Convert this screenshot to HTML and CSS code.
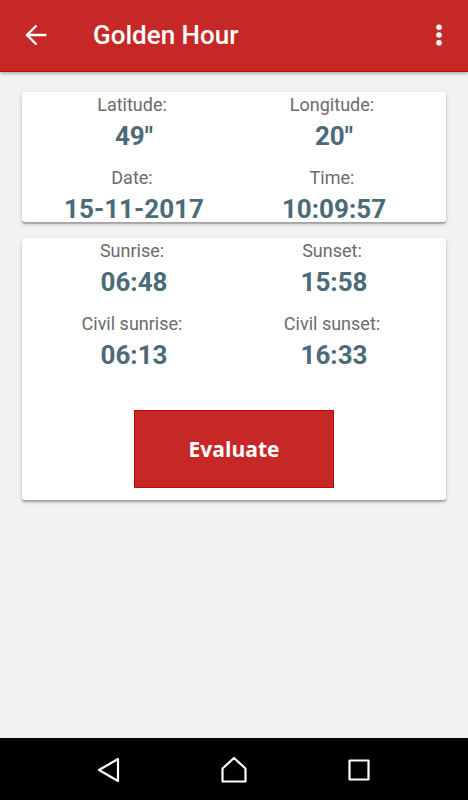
FILE: index.html
```html
<!DOCTYPE html>
<html lang="en">
<head>
<meta charset="utf-8">
<meta name="viewport" content="width=device-width, initial-scale=1">
<title>Golden Hour</title>
<link rel="stylesheet" href="styles.css">
</head>
<body>
<header class="app-bar">
  <button class="icon-button" type="button" aria-label="Back">
    <svg width="24" height="24" viewBox="0 0 24 24" fill="none" stroke="currentColor" stroke-width="2.4"><path d="M22.5 12H3M12.5 2.5 3 12l9.500 9.500"/></svg>
  </button>
  <h1 class="title">Golden Hour</h1>
  <button class="icon-button" type="button" aria-label="More options">
    <svg width="24" height="24" viewBox="0 0 24 24" fill="currentColor"><circle cx="12" cy="4.200" r="2.800"/><circle cx="12" cy="12" r="2.800"/><circle cx="12" cy="19.800" r="2.800"/></svg>
  </button>
</header>
<main class="content">
  <section class="card">
    <dl class="readings">
      <div><dt class="label">Latitude:</dt><dd class="value">49"</dd></div>
      <div><dt class="label">Longitude:</dt><dd class="value">20"</dd></div>
      <div><dt class="label">Date:</dt><dd class="value">15-11-2017</dd></div>
      <div><dt class="label">Time:</dt><dd class="value">10:09:57</dd></div>
    </dl>
  </section>
  <section class="card">
    <dl class="readings">
      <div><dt class="label">Sunrise:</dt><dd class="value">06:48</dd></div>
      <div><dt class="label">Sunset:</dt><dd class="value">15:58</dd></div>
      <div><dt class="label">Civil sunrise:</dt><dd class="value">06:13</dd></div>
      <div><dt class="label">Civil sunset:</dt><dd class="value">16:33</dd></div>
    </dl>
    <button class="evaluate" type="button">Evaluate</button>
  </section>
</main>
<nav class="system-bar" aria-label="System">
  <button class="icon-button" type="button" aria-label="Back">
    <svg width="30" height="30" viewBox="0 0 30 30" fill="none" stroke="currentColor" stroke-width="2.200" stroke-linejoin="round"><path d="M24 4v22L5 15z"/></svg>
  </button>
  <button class="icon-button" type="button" aria-label="Home">
    <svg width="30" height="30" viewBox="0 0 30 30" fill="none" stroke="currentColor" stroke-width="2.200" stroke-linejoin="round"><path d="M3.500 26.500h23V13.500L15 3 3.500 13.500z"/></svg>
  </button>
  <button class="icon-button" type="button" aria-label="Recent apps">
    <svg width="30" height="30" viewBox="0 0 30 30" fill="none" stroke="currentColor" stroke-width="2.200" stroke-linejoin="round"><path d="M5.500 5.500h19v19h-19z"/></svg>
  </button>
</nav>
</body>
</html>
```
FILE: styles.css
```css
* {
  box-sizing: border-box;
}

body {
  margin: 0;
  min-height: 100vh;
  display: flex;
  flex-direction: column;
  background: #f2f2f2;
  font-family: Roboto, "Liberation Sans", sans-serif;
}

.icon-button {
  display: flex;
  padding: 0;
  border: 0;
  background: none;
  color: #fff;
}

.app-bar {
  display: flex;
  align-items: center;
  padding: 23px 17px 24px 24px;
  background: #c62828;
  border-bottom: 1px solid #c40a0a;
  box-shadow: 0 1px 4px rgba(0, 0, 0, 0.4);
}

.title {
  flex: 1;
  margin: 0 0 0 45px;
  color: #fff;
  font-size: 26px;
  font-weight: 500;
  line-height: 24px;
}

.content {
  flex: 1;
  display: flex;
  flex-direction: column;
  gap: 16px;
  padding: 20px 22px;
}

.card {
  padding: 0 12px;
  border-radius: 3px;
  background: #fff;
  box-shadow: 0 2px 1px rgba(0, 0, 0, 0.2), 0 2px 4px rgba(0, 0, 0, 0.2);
}

.readings {
  display: grid;
  grid-template-columns: 1fr 1fr;
  row-gap: 16px;
  margin: 0;
  text-align: center;
}

.label {
  padding-right: 4px;
  color: #6b6b6b;
  font-size: 18px;
  line-height: 26px;
}

.value {
  margin: 5px 0 0;
  color: #4c6a78;
  font-size: 26px;
  font-weight: 700;
  line-height: 26px;
}

.evaluate {
  display: block;
  width: 50%;
  margin: 42px auto 12px;
  padding: 25px 0;
  border: 1px solid #c40a0a;
  background: #c62828;
  color: #fff;
  font-family: "Open Sans", "Liberation Sans", sans-serif;
  font-size: 21px;
  font-weight: 700;
  line-height: 26px;
}

.system-bar {
  display: flex;
  justify-content: center;
  gap: 95px;
  padding: 17px 0 15px;
  background: #000;
}
```
